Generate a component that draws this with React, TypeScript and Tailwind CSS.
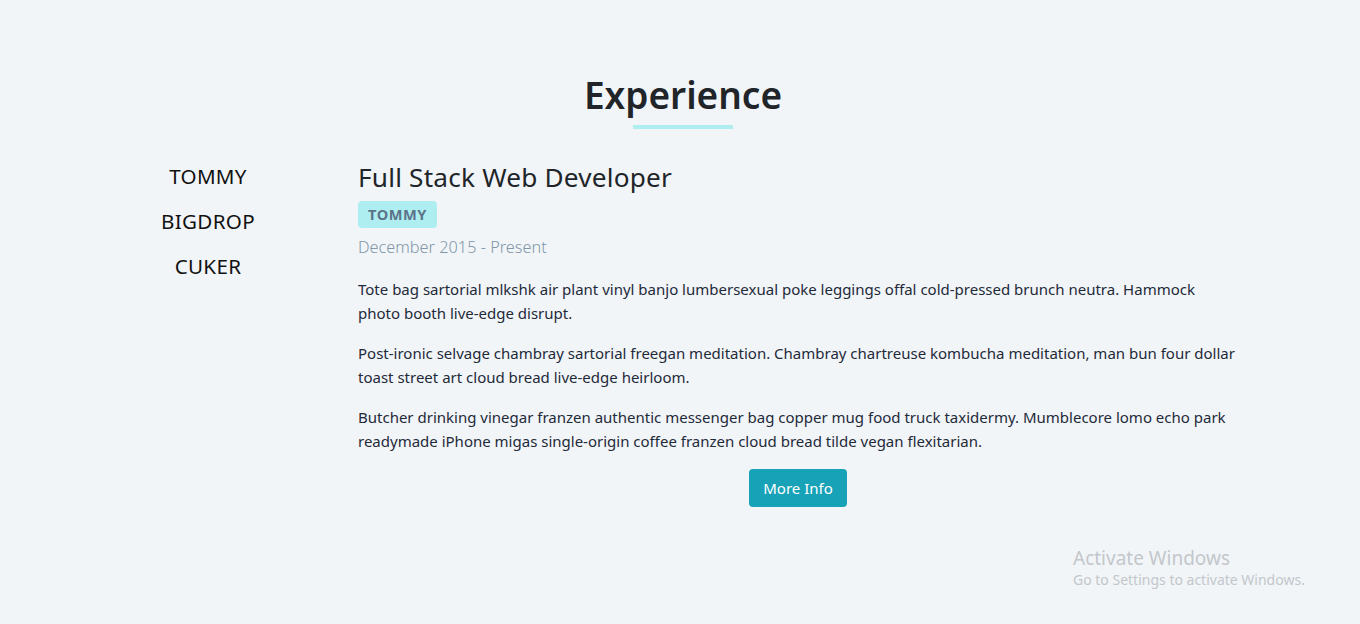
import React from "react"

const jobs = ["TOMMY", "BIGDROP", "CUKER"]

const paragraphs = [
  "Tote bag sartorial mlkshk air plant vinyl banjo lumbersexual poke leggings offal cold-pressed brunch neutra. Hammock photo booth live-edge disrupt.",
  "Post-ironic selvage chambray sartorial freegan meditation. Chambray chartreuse kombucha meditation, man bun four dollar toast street art cloud bread live-edge heirloom.",
  "Butcher drinking vinegar franzen authentic messenger bag copper mug food truck taxidermy. Mumblecore lomo echo park readymade iPhone migas single-origin coffee franzen cloud bread tilde vegan flexitarian.",
]

export default function App() {
  return (
    <div
      className="min-h-[624px] bg-[#f1f5f8] text-[#212529] relative"
      style={{ fontFamily: '"Noto Sans", "Open Sans", sans-serif' }}
    >
      <section className="pt-[67px]">
        {/* Title */}
        <div className="flex flex-col items-center pl-[6px]">
          <h2 className="text-[37px] leading-[56px] font-semibold">Experience</h2>
          <div className="w-[100px] h-[4px] bg-[#aeeef0] mt-[2px]"></div>
        </div>

        {/* Jobs */}
        <div className="flex mt-[30px] pl-[140px]">
          <div className="w-[136px] flex flex-col items-center gap-[16px] pt-[3px]">
            {jobs.map((j) => (
              <button key={j} className="text-[20.6px] leading-[29px] tracking-[0.3px] text-[#111]">
                {j}
              </button>
            ))}
          </div>

          <article className="ml-[82px] w-[880px]">
            <h3 className="text-[26.2px] leading-[36px] tracking-[0.2px]">Full Stack Web Developer</h3>
            <span className="inline-block mt-[6px] px-[10px] py-[3px] rounded-[4px] bg-[#aeeef0] text-[#5a7489] text-[14.6px] leading-[21px] font-bold tracking-[0.5px]">
              TOMMY
            </span>
            <p className="mt-[7px] text-[#8297a8] text-[16.3px] leading-[24px] font-light">December 2015 - Present</p>

            <div className="mt-[18px] flex flex-col gap-[16px]">
              {paragraphs.map((p, i) => (
                <p key={i} className="text-[15px] leading-[24px] text-[#1f2a3a]">
                  {p}
                </p>
              ))}
            </div>

            <div className="flex justify-center mt-[16px]">
              <button className="bg-[#17a2b8] text-white text-[15px] leading-[22px] px-[14px] py-[8px] rounded-[4px]">
                More Info
              </button>
            </div>
          </article>
        </div>
      </section>

      {/* OS watermark */}
      <div className="absolute left-[1073px] top-[546px] text-[#c3c7cb] pointer-events-none">
        <div className="text-[19px] leading-[24px]">Activate Windows</div>
        <div className="text-[14px] leading-[20px]">Go to Settings to activate Windows.</div>
      </div>
    </div>
  )
}
